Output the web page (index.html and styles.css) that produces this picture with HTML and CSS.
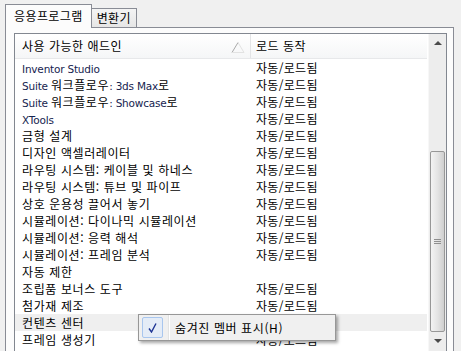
FILE: index.html
```html
<!DOCTYPE html>
<html lang="ko">
<head>
    <meta charset="UTF-8">
    <title>애드인 관리자</title>
    <link rel="stylesheet" href="styles.css">
</head>
<body>
    <div class="window">
        <div class="tabs">
            <div class="tab active">응용프로그램</div>
            <div class="tab">변환기</div>
        </div>
        <div class="panel">
            <div class="list">
                <div class="list-content">
                    <div class="list-header">
                        <div class="col-name">
                            <span>사용 가능한 애드인</span>
                            <svg class="sort-arrow" width="14" height="11" viewBox="0 0 14 11">
                                <polyline points="1,10.5 7,0.5" fill="none" stroke="#a8a8a8" stroke-width="1"/>
                                <polyline points="7,0.5 13,10.5 1,10.5" fill="none" stroke="#e2e2e2" stroke-width="1"/>
                            </svg>
                        </div>
                        <div class="col-status">로드 동작</div>
                    </div>
                    <div class="row"><span class="name"><span class="latin">Inventor Studio</span></span><span class="status">자동/로드됨</span></div>
                    <div class="row"><span class="name"><span class="latin">Suite </span>워크플로우<span class="latin">: 3ds Max</span>로</span><span class="status">자동/로드됨</span></div>
                    <div class="row"><span class="name"><span class="latin">Suite </span>워크플로우<span class="latin">: Showcase</span>로</span><span class="status">자동/로드됨</span></div>
                    <div class="row"><span class="name"><span class="latin">XTools</span></span><span class="status">자동/로드됨</span></div>
                    <div class="row"><span class="name">금형 설계</span><span class="status">자동/로드됨</span></div>
                    <div class="row"><span class="name">디자인 액셀러레이터</span><span class="status">자동/로드됨</span></div>
                    <div class="row"><span class="name">라우팅 시스템: 케이블 및 하네스</span><span class="status">자동/로드됨</span></div>
                    <div class="row"><span class="name">라우팅 시스템: 튜브 및 파이프</span><span class="status">자동/로드됨</span></div>
                    <div class="row"><span class="name">상호 운용성 끌어서 놓기</span><span class="status">자동/로드됨</span></div>
                    <div class="row"><span class="name">시뮬레이션: 다이나믹 시뮬레이션</span><span class="status">자동/로드됨</span></div>
                    <div class="row"><span class="name">시뮬레이션: 응력 해석</span><span class="status">자동/로드됨</span></div>
                    <div class="row"><span class="name">시뮬레이션: 프레임 분석</span><span class="status">자동/로드됨</span></div>
                    <div class="row"><span class="name">자동 제한</span><span class="status"></span></div>
                    <div class="row"><span class="name">조립품 보너스 도구</span><span class="status">자동/로드됨</span></div>
                    <div class="row"><span class="name">첨가재 제조</span><span class="status">자동/로드됨</span></div>
                    <div class="row hover"><span class="name">컨텐츠 센터</span><span class="status">자동/로드됨</span></div>
                    <div class="row"><span class="name">프레임 생성기</span><span class="status">자동/로드됨</span></div>
                </div>
                <div class="scrollbar">
                    <div class="scroll-btn"><span class="arrow-up"></span></div>
                    <div class="scroll-track"></div>
                    <div class="scroll-thumb"><span class="grip"></span></div>
                    <div class="scroll-btn"><span class="arrow-down"></span></div>
                </div>
            </div>
        </div>
    </div>

    <div class="context-menu">
        <div class="menu-check">
            <svg width="9" height="10" viewBox="0 0 9 10">
                <polyline points="1,5.5 3.5,9 8,0.5" fill="none" stroke="#1d3494" stroke-width="1.4"/>
            </svg>
        </div>
        <div class="menu-sep"></div>
        <div class="menu-label">숨겨진 멤버 표시(H)</div>
    </div>
</body>
</html>
```

FILE: styles.css
```css
body {
    margin: 0;
    padding: 0;
    background-color: #f0f0f0;
    font-family: "Noto Sans CJK KR", sans-serif;
    font-size: 12px;
    color: #000;
    height: 351px;
    overflow: hidden;
}
.window {
    padding: 5px 7px 0 5px;
}
.tabs {
    display: flex;
    align-items: flex-end;
    height: 22px;
}
.tab {
    height: 18px;
    line-height: 18px;
    padding: 0 5px;
    letter-spacing: 0.4px;
    border: 1px solid #898c95;
    border-bottom: none;
    border-left: none;
    background: linear-gradient(#f4f4f4, #e6e6e6);
}
.tab.active {
    position: relative;
    z-index: 1;
    height: 23px;
    line-height: 21px;
    margin-bottom: -1px;
    padding: 0 8px;
    border-left: 1px solid #898c95;
    background: #fcfcfc;
}
.panel {
    border: 1px solid #898c95;
    border-bottom: none;
    background-color: #fcfcfc;
    padding: 5px 6px 0 8px;
    height: 318px;
}
.list {
    display: flex;
    border: 1px solid #828790;
    border-bottom: none;
    background-color: #fff;
    height: 317px;
    overflow: hidden;
}
.list-content {
    flex: 1;
    padding-right: 1px;
}
.list-header {
    display: flex;
    height: 24px;
    line-height: 24px;
    letter-spacing: 0.5px;
    border-bottom: 1px solid #e7e8ea;
    background: linear-gradient(#ffffff, #f5f6f7);
}
.col-name {
    width: 228px;
    padding-left: 7px;
    display: flex;
    align-items: center;
    justify-content: space-between;
    border-right: 1px solid #e3e4e6;
}
.sort-arrow {
    margin-right: 5px;
    margin-top: 2px;
}
.col-status {
    padding-left: 5px;
}
.row {
    display: flex;
    height: 17px;
    line-height: 17px;
    padding-left: 7px;
    white-space: nowrap;
}
.row.hover {
    background-color: #efefef;
}
.name {
    width: 234px;
    letter-spacing: 0.6px;
}
.status {
    letter-spacing: 0.3px;
}
.latin {
    font-family: "DejaVu Sans", sans-serif;
    font-size: 10.5px;
    letter-spacing: -0.2px;
    color: #16244f;
}
.scrollbar {
    width: 17px;
    display: flex;
    flex-direction: column;
    background-color: #ededed;
    border-left: 1px solid #f7f7f7;
}
.scroll-btn {
    height: 17px;
    display: flex;
    align-items: center;
    justify-content: center;
}
.arrow-up {
    width: 0;
    height: 0;
    border-left: 4px solid transparent;
    border-right: 4px solid transparent;
    border-bottom: 4px solid #4a4a4a;
}
.arrow-down {
    width: 0;
    height: 0;
    border-left: 4px solid transparent;
    border-right: 4px solid transparent;
    border-top: 4px solid #4a4a4a;
}
.scroll-track {
    height: 100px;
}
.scroll-thumb {
    height: 179px;
    margin: 0 1px;
    border: 1px solid #979797;
    border-radius: 2px;
    background: linear-gradient(to right, #f3f3f3, #e4e4e4 50%, #cfcfcf);
    display: flex;
    align-items: center;
    justify-content: center;
}
.grip {
    width: 7px;
    height: 5px;
    background: repeating-linear-gradient(#8f8f8f 0 1px, transparent 1px 2px);
}
.context-menu {
    position: absolute;
    left: 138px;
    top: 314px;
    width: 196px;
    height: 25px;
    display: flex;
    align-items: center;
    border: 1px solid #979797;
    background-color: #f0f0f0;
    box-shadow: 2px 2px 3px rgba(0, 0, 0, 0.35);
}
.menu-check {
    width: 19px;
    height: 19px;
    margin-left: 3px;
    border: 1px solid #a8c6ee;
    border-radius: 2px;
    background-color: #e4ecf7;
    display: flex;
    align-items: center;
    justify-content: center;
}
.menu-sep {
    width: 1px;
    height: 25px;
    margin-left: 5px;
    background-color: #e2e3e3;
    border-right: 1px solid #ffffff;
}
.menu-label {
    padding-left: 5px;
    letter-spacing: 0.6px;
}
```
